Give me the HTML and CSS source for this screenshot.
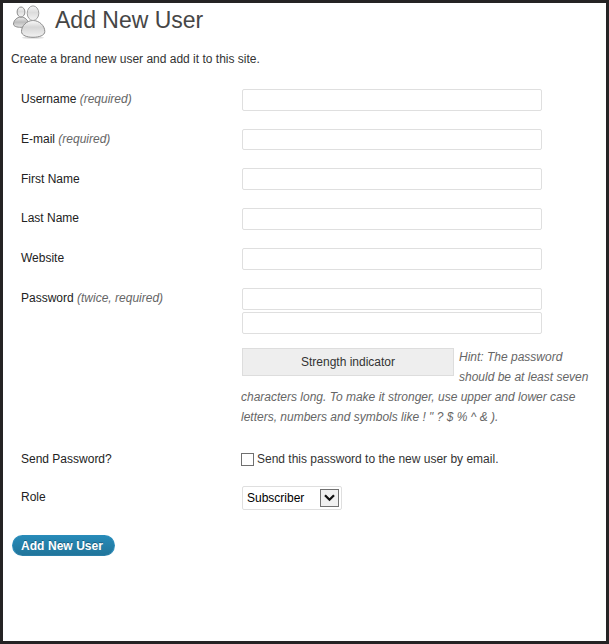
FILE: index.html
```html
<!DOCTYPE html>
<html lang="en">
<head>
<meta charset="utf-8">
<title>Add New User</title>
<link rel="stylesheet" href="styles.css">
</head>
<body>
<main class="page">
  <header class="heading">
    <svg class="users-icon" width="36" height="36" viewBox="0 0 36 36" aria-hidden="true">
      <defs>
        <linearGradient id="head" x1="0" y1="0" x2="0" y2="1">
          <stop offset="0" stop-color="#f5f5f5"/><stop offset=".45" stop-color="#dcdcdc"/><stop offset="1" stop-color="#f4f4f4"/>
        </linearGradient>
        <linearGradient id="body" x1="0" y1="0" x2="0" y2="1">
          <stop offset="0" stop-color="#fafafa"/><stop offset=".4" stop-color="#d6d6d6"/><stop offset="1" stop-color="#f2f2f2"/>
        </linearGradient>
        <linearGradient id="back" x1="0" y1="0" x2="0" y2="1">
          <stop offset="0" stop-color="#eee"/><stop offset=".5" stop-color="#bcbcbc"/><stop offset="1" stop-color="#e5e5e5"/>
        </linearGradient>
      </defs>
      <ellipse cx="22" cy="34.700" rx="11" ry="1" fill="#ddd"/>
      <g stroke="#8b8b8b">
        <path d="M2.500 21C2.500 17.500 6 14 10 14S17.500 17.500 17.500 21C17.500 23.500 14 24.300 10 24.300S2.500 23.500 2.500 21Z" fill="url(#back)"/>
        <ellipse cx="10" cy="9" rx="3.900" ry="5" fill="url(#head)"/>
        <path d="M10.500 28.500C10.500 22.500 16 17.500 22 17.500S33.800 22.500 33.800 28.500C33.800 32.500 28 34.300 22 34.300S10.500 32.500 10.500 28.500Z" fill="url(#body)"/>
        <ellipse cx="22" cy="10.200" rx="5.800" ry="7.300" fill="url(#head)" stroke="#a0a0a0"/>
      </g>
    </svg>
    <h1 class="title">Add New User</h1>
  </header>
  <p class="intro">Create a brand new user and add it to this site.</p>
  <form>
    <div class="row"><label for="username">Username <em>(required)</em></label><input class="field" id="username" type="text"></div>
    <div class="row"><label for="email">E-mail <em>(required)</em></label><input class="field field-short" id="email" type="text"></div>
    <div class="row"><label class="label" for="first">First Name</label><input class="field" id="first" type="text"></div>
    <div class="row"><label for="last">Last Name</label><input class="field" id="last" type="text"></div>
    <div class="row"><label for="site">Website</label><input class="field" id="site" type="text"></div>
    <div class="row row-password">
      <label for="pass">Password <em>(twice, required)</em></label>
      <div class="passwords">
        <input class="field" id="pass" type="password">
        <input class="field" type="password" aria-label="Repeat password">
        <div class="hint">
          <div class="hint-top">
            <div class="strength">Strength indicator</div>
            <em>Hint: The password should be at least seven</em>
          </div>
          <em>characters long. To make it stronger, use upper and lower case letters, numbers and symbols like ! " ? $ % ^ &amp; ).</em>
        </div>
      </div>
    </div>
    <div class="row row-send">
      <span class="label">Send Password?</span>
      <label class="check"><input class="box" type="checkbox">Send this password to the new user by email.</label>
    </div>
    <div class="row row-role">
      <span class="label">Role</span>
      <div class="select" role="combobox" tabindex="0">
        <span>Subscriber</span>
        <span class="arrow"><svg width="11" height="8" viewBox="0 0 11 8" aria-hidden="true"><path d="M1 1.300 5.500 5.700 10 1.300" fill="none" stroke="#111" stroke-width="2.300"/></svg></span>
      </div>
    </div>
    <button class="submit" type="button">Add New User</button>
  </form>
</main>
</body>
</html>
```
FILE: styles.css
```css
* { box-sizing: border-box; }

body {
  margin: 0;
  background: #fff;
  color: #333;
  font: 12px/20px "Liberation Sans", Arial, sans-serif;
}

.page {
  height: 644px;
  border: 3px solid #252324;
  padding: 0 8px;
}

.heading {
  display: flex;
  height: 39px;
}

.title {
  margin: 2px 0 0 8px;
  color: #464646;
  font-size: 23px;
  font-weight: 400;
  line-height: 30px;
}

.intro { margin: 7px 0 0; }

.row {
  display: grid;
  grid-template-columns: 221px 1fr;
  align-items: start;
  height: 39.8px;
  padding-left: 10px;
  color: #222;
}

.intro + form { padding-top: 19.8px; }

em { color: #666; }

.field {
  display: block;
  width: 300px;
  height: 22px;
  margin: 0;
  border: 1px solid #dfdfdf;
  border-radius: 2px;
  padding: 2px;
  background: #fff;
  font: inherit;
}

.field-short { height: 21px; }

.row-password { height: 160.2px; }

.passwords .field + .field { margin-top: 2px; }

.hint {
  width: 352px;
  margin: 13px 0 0 -1px;
}

.hint-top {
  display: flex;
  align-items: flex-start;
  gap: 5px;
  height: 40px;
}

.strength {
  flex: none;
  width: 212px;
  height: 28px;
  margin: 1px 0 0 1px;
  border: 1px solid #ddd;
  background: #eee;
  color: #333;
  line-height: 26px;
  text-align: center;
}

.row-send { height: 38px; }

.check {
  display: flex;
  align-items: center;
  margin: 1px 0 0 -1px;
  color: #333;
}

.label { margin-top: 1px; }

.box {
  appearance: none;
  width: 13px;
  height: 13px;
  margin: 1px 3px 0 0;
  border: 1px solid #707070;
  background: #fff;
}

.row-role { height: 49px; }

.select {
  display: flex;
  align-items: center;
  justify-content: space-between;
  width: 100px;
  height: 24px;
  border: 1px solid #dfdfdf;
  border-radius: 2px;
  padding: 0 2px 0 4px;
  color: #000;
}

.arrow {
  display: flex;
  align-items: center;
  justify-content: center;
  width: 19px;
  height: 18px;
  border: 1px solid #707070;
  background: #f0f0f0;
}

.submit {
  display: block;
  width: 103px;
  height: 21px;
  margin-left: 1px;
  border: 1px solid #298cba;
  border-bottom-color: #2a7fa8;
  border-radius: 11px;
  padding: 1px 0 0 8px;
  background: linear-gradient(#278ab7, #21759b);
  color: #fff;
  font: bold 12px/18px "Liberation Sans", Arial, sans-serif;
  letter-spacing: .06px;
  text-align: left;
  text-shadow: 0 -1px 0 rgba(0, 0, 0, .3);
}
```
